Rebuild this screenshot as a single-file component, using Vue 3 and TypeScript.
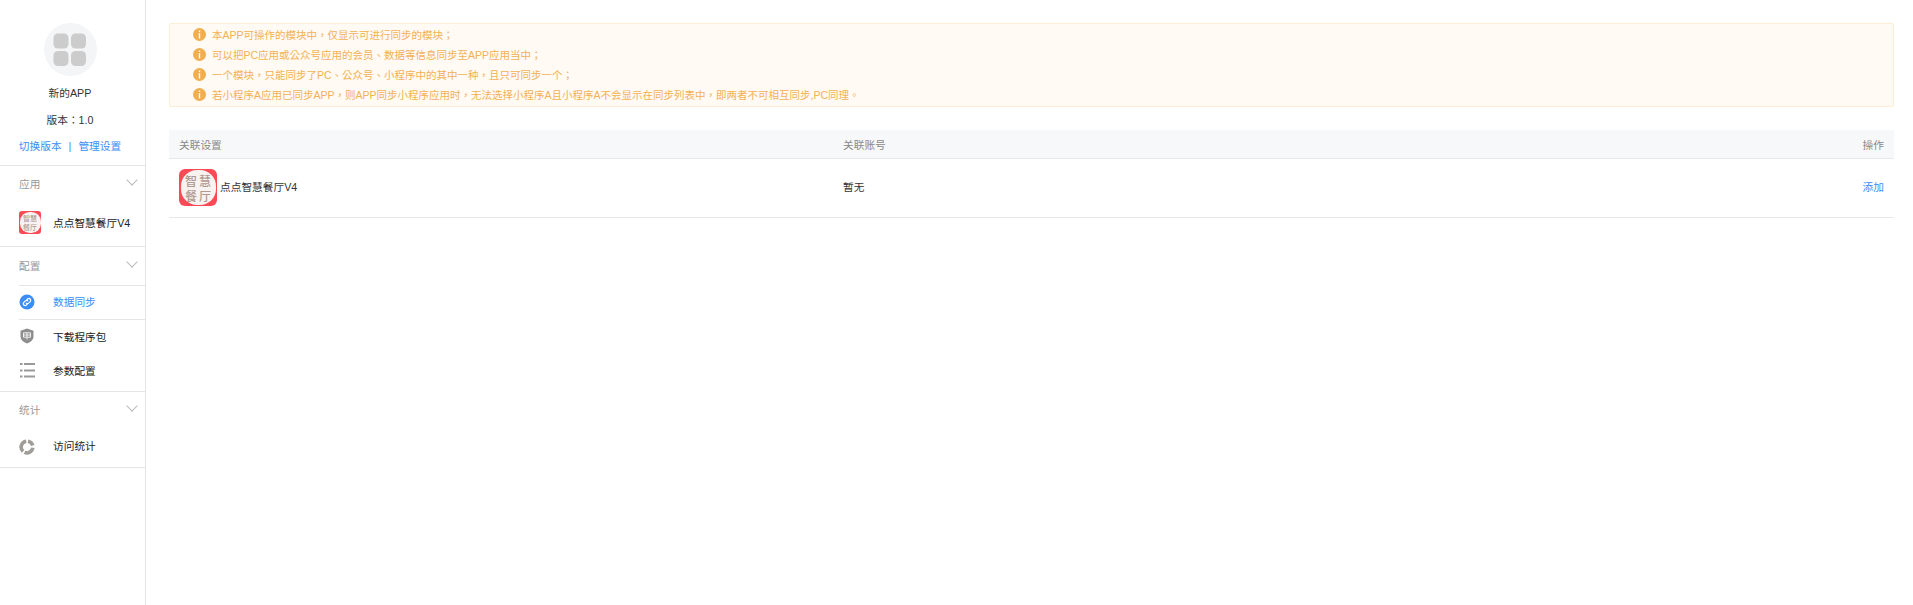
<script setup lang="ts">
const notices: string[] = [
  '本APP可操作的模块中，仅显示可进行同步的模块；',
  '可以把PC应用或公众号应用的会员、数据等信息同步至APP应用当中；',
  '一个模块，只能同步了PC、公众号、小程序中的其中一种，且只可同步一个；',
  '若小程序A应用已同步APP，则APP同步小程序应用时，无法选择小程序A且小程序A不会显示在同步列表中，即两者不可相互同步,PC同理。',
]
</script>

<template>
  <div class="page">
    <aside class="side">
      <div class="profile">
        <div class="avatar">
          <svg width="34" height="34" viewBox="0 0 34 34">
            <rect x="0.5" y="0.5" width="15" height="15" rx="4.5" fill="#cccccc" />
            <rect x="18" y="0.5" width="15" height="15" rx="4.5" fill="#cccccc" />
            <rect x="0.5" y="18" width="15" height="15" rx="4.5" fill="#cccccc" />
            <rect x="18" y="18" width="15" height="15" rx="4.5" fill="#cccccc" />
          </svg>
        </div>
        <div class="pname">新的APP</div>
        <div class="pver">版本：1.0</div>
        <div class="plinks"><a>切换版本</a><span class="sep">|</span><a>管理设置</a></div>
      </div>

      <section class="group g1">
        <div class="ghead"><span>应用</span><i class="chev"></i></div>
        <div class="item app">
          <div class="logo small"><div class="logo-in"><span>智慧</span><span>餐厅</span></div></div>
          <span>点点智慧餐厅V4</span>
        </div>
      </section>

      <section class="group g2">
        <div class="ghead"><span>配置</span><i class="chev"></i></div>
        <div class="item active">
          <svg class="ic" width="16" height="16" viewBox="0 0 16 16">
            <circle cx="8" cy="8" r="7.500" fill="#3b8df7" />
            <g fill="none" stroke="#fff" stroke-width="1.200" stroke-linecap="round">
              <path d="M7.600 6.100 8.900 4.800a1.800 1.800 0 0 1 2.500 2.500L9.600 9.100a1.800 1.800 0 0 1-2.400 0" />
              <path d="M8.400 9.900 7.100 11.200a1.800 1.800 0 0 1-2.500-2.500L6.400 6.900a1.800 1.800 0 0 1 2.400 0" />
            </g>
          </svg>
          <span>数据同步</span>
        </div>
        <div class="item plain">
          <svg class="ic" width="16" height="16" viewBox="0 0 16 16">
            <path d="M8 0.500 14.500 2.800V8.500C14.500 12 11 14.500 8 15.500 5 14.500 1.500 12 1.500 8.500V2.800Z" fill="#8e8e8e" />
            <path d="M4.500 4.800H11.500V9.200H4.500ZM4.500 7H11.500M8 4.800V11.500" fill="none" stroke="#f0f0f0" stroke-width="1" />
          </svg>
          <span>下载程序包</span>
        </div>
        <div class="item plain">
          <svg class="ic" width="16" height="16" viewBox="0 0 16 16">
            <path d="M1 2H3.500M5 2H16M1 8.500H3.500M5 8.500H16M1 14.500H3.500M5 14.500H16" fill="none" stroke="#999" stroke-width="2" />
          </svg>
          <span>参数配置</span>
        </div>
      </section>

      <section class="group g3">
        <div class="ghead"><span>统计</span><i class="chev"></i></div>
        <div class="item plain">
          <svg class="ic" width="16" height="16" viewBox="0 0 16 16">
            <g fill="none" stroke="#a09c98" stroke-width="3.600">
              <path d="M9 2.200A5.900 5.900 0 0 1 13.700 6.500" />
              <path d="M13.800 8.800A5.900 5.900 0 0 1 5.500 13.300" />
              <path d="M4.100 12.400A5.900 5.900 0 0 1 7.200 2.200" />
            </g>
          </svg>
          <span>访问统计</span>
        </div>
      </section>
    </aside>

    <main class="main">
      <div class="notice">
        <div v-for="n in notices" :key="n" class="nline">
          <svg class="nic" width="13" height="13" viewBox="0 0 13 13">
            <circle cx="6.500" cy="6.500" r="6.500" fill="#f2ae4c" />
            <rect x="5.800" y="2.500" width="1.400" height="1.500" fill="#fff" />
            <rect x="5.800" y="5" width="1.400" height="5.500" fill="#fff" />
          </svg>
          <span>{{ n }}</span>
        </div>
      </div>

      <div class="table">
        <div class="row thead">
          <div class="c1">关联设置</div>
          <div class="c2">关联账号</div>
          <div class="c3">操作</div>
        </div>
        <div class="row tbody">
          <div class="c1 appcell">
            <div class="logo big"><div class="logo-in"><span>智慧</span><span>餐厅</span></div></div>
            <span class="lift">点点智慧餐厅V4</span>
          </div>
          <div class="c2 lift">暂无</div>
          <div class="c3 lift"><a>添加</a></div>
        </div>
      </div>
    </main>
  </div>
</template>

<style scoped>
.page {
  display: flex;
  min-height: 605px;
  font-family: "Liberation Sans", "Noto Sans CJK TC", sans-serif;
  font-size: 10.7px;
  color: #333;
  background: #fff;
}
a { color: #3b8df7; }
.side {
  width: 145px;
  flex: none;
  border-right: 1px solid #e5e5e5;
}
.profile {
  height: 166px;
  display: flex;
  flex-direction: column;
  align-items: center;
  padding: 23px 5px 0 0;
  box-sizing: border-box;
  border-bottom: 1px solid #e5e5e5;
}
.avatar {
  width: 53px;
  height: 53px;
  border-radius: 50%;
  background: #f4f5f7;
  display: flex;
  align-items: center;
  justify-content: center;
}
.pname { margin-top: 7px; line-height: 20px; }
.pver { margin-top: 7px; line-height: 20px; }
.plinks { margin-top: 6px; line-height: 20px; display: flex; gap: 7px; }
.sep { color: #3b8df7; }
.group { border-bottom: 1px solid #e5e5e5; box-sizing: border-box; }
.ghead {
  display: flex;
  justify-content: space-between;
  color: #999;
  padding: 0 9px 0 19px;
  height: 36px;
  align-items: center;
}
.ghead span { margin-top: -2px; }
.chev {
  width: 7px;
  height: 7px;
  margin-top: -9px;
  border-right: 1px solid #bbb;
  border-bottom: 1px solid #bbb;
  transform: rotate(45deg);
}
.item {
  display: flex;
  align-items: center;
  color: #222;
  height: 34px;
  padding-left: 53px;
  position: relative;
}
.item > span { margin-top: -2px; }
.ic { position: absolute; left: 19px; top: 8px; }
.item.app { height: 42px; }
.item.active {
  color: #3b8df7;
  border-top: 1px solid #e5e5e5;
  border-bottom: 1px solid #e5e5e5;
  margin-left: 19px;
  padding-left: 34px;
  height: 35px;
  box-sizing: border-box;
}
.item.active .ic { left: 0; top: 8px; }
.g1 { height: 81px; }
.g2 { height: 145px; }
.g2 .ghead { height: 38px; }
.g3 { height: 76px; }
.g3 .ghead { height: 37px; }
.g3 .ic { top: 10px; }

.logo {
  background: #fb4a55;
  display: flex;
  align-items: center;
  justify-content: center;
  flex: none;
}
.logo-in {
  border-radius: 46%;
  background: #f8f3f1;
  display: flex;
  flex-direction: column;
  align-items: center;
  justify-content: center;
  color: #b09a90;
  font-weight: 500;
  font-family: "Noto Sans CJK SC", sans-serif;
}
.logo.small {
  width: 22px;
  height: 23px;
  border-radius: 3px;
  position: absolute;
  left: 19px;
  top: 9px;
}
.logo.small .logo-in { width: 21px; height: 21px; font-size: 7px; line-height: 9px; }
.logo.big { width: 38px; height: 37px; border-radius: 6px; }
.logo.big .logo-in { width: 35px; height: 35px; padding-left: 2px; box-sizing: border-box; font-size: 12px; line-height: 15px; letter-spacing: 2px; }

.main { flex: 1; padding: 23px 19px 0 23px; min-width: 0; }
.notice {
  height: 84px;
  box-sizing: border-box;
  background: #fffaf3;
  border: 1px solid #fbeed5;
  border-radius: 2px;
  padding: 1px 0 0 23px;
  color: #f3b154;
  font-size: 10.5px;
}
.nline {
  display: flex;
  align-items: center;
  height: 20px;
  gap: 6px;
}
.nline:first-child { height: 19px; }
.nic { flex: none; }
.table { margin-top: 23px; }
.row { display: flex; align-items: center; padding: 0 10px; box-sizing: border-box; }
.thead {
  height: 29px;
  background: #f7f8fa;
  border-bottom: 1px solid #e8e8e8;
  color: #888;
}
.tbody { height: 59px; border-bottom: 1px solid #e8e8e8; padding-bottom: 1px; }
.lift { margin-top: -3px; }
.c1 { width: 664px; flex: none; }
.c1.lift, .appcell { margin-top: 0; }
.c2 { flex: 1; }
.c3 { text-align: right; }
.appcell { display: flex; align-items: center; gap: 3px; }
</style>
